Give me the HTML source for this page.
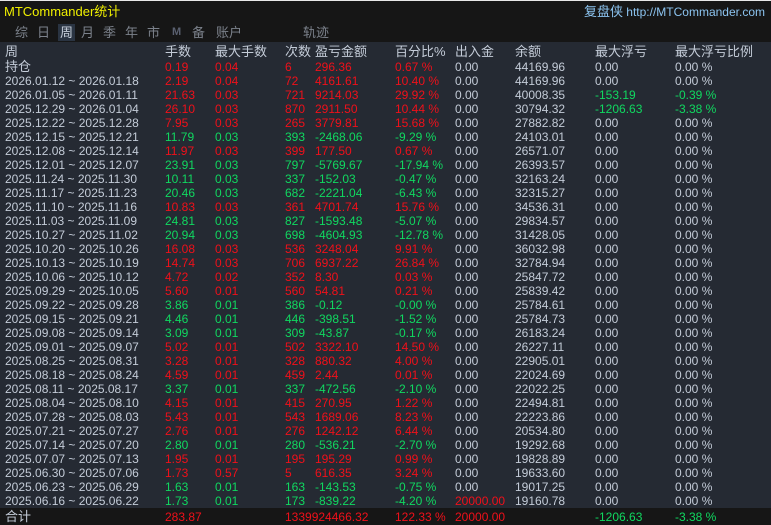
<!DOCTYPE html>
<html><head><meta charset="utf-8"><style>
*{margin:0;padding:0;box-sizing:border-box}
body{width:771px;height:525px;background:#252a33;font-family:"Liberation Sans","Noto Sans CJK SC",sans-serif;font-size:12px;color:#c4ccd8;position:relative;overflow:hidden}
#top{position:absolute;left:0;top:0;width:771px;height:42px;background:#161616;border-top:1px solid #e8e8e8}
#title{position:absolute;left:4px;top:0px;color:#f0f000;font-size:13px}
#site{position:absolute;right:6px;top:0px;color:#8cc4f0;font-size:12px}
#site b{font-weight:normal;font-size:13px}
.tab{position:absolute;top:24px;color:#7c828c;font-size:13px;height:17px;line-height:17px}
.tab.sel{background:#2a3442;color:#c8d0dc;padding:0 2px}
.row{position:absolute;left:0;width:771px;height:14px;line-height:14px;white-space:nowrap}
.row span{position:absolute}
.row span:nth-child(1){left:5px}
.row span:nth-child(2){left:165px}
.row span:nth-child(3){left:215px}
.row span:nth-child(4){left:285px}
.row span:nth-child(5){left:315px}
.row span:nth-child(6){left:395px}
.row span:nth-child(7){left:455px}
.row span:nth-child(8){left:515px}
.row span:nth-child(9){left:595px}
.row span:nth-child(10){left:675px}
.r span:nth-child(n+2):nth-child(-n+6){color:#f0101a}
.g span:nth-child(n+2):nth-child(-n+6){color:#10d860}
.hd{font-size:13px}
.gr{color:#10d860!important}.rd{color:#f0101a!important}
#foot{position:absolute;left:0;top:508px;width:771px;height:17px;background:#161616}
</style></head><body>
<div id="top">
<div id="title">MTCommander统计</div>
<div id="site"><b>复盘侠</b> http://MTCommander.com</div>
</div>
<div class="tab" style="left:15px">综</div>
<div class="tab" style="left:37px">日</div>
<div class="tab sel" style="left:58px">周</div>
<div class="tab" style="left:81px">月</div>
<div class="tab" style="left:103px">季</div>
<div class="tab" style="left:125px">年</div>
<div class="tab" style="left:147px">市</div>
<div class="tab" style="left:172px;font-size:11px;font-weight:bold;color:#5a6070">M</div>
<div class="tab" style="left:192px">备</div>
<div class="tab" style="left:216px">账户</div>
<div class="tab" style="left:303px">轨迹</div>

<div class="row hd" style="top:45px"><span>周</span><span>手数</span><span>最大手数</span><span>次数</span><span>盈亏金额</span><span>百分比%</span><span>出入金</span><span>余额</span><span>最大浮亏</span><span>最大浮亏比例</span></div>
<div class="row r" style="top:60px"><span class="hd">持仓</span><span>0.19</span><span>0.04</span><span>6</span><span>296.36</span><span>0.67 %</span><span>0.00</span><span>44169.96</span><span>0.00</span><span>0.00 %</span></div>
<div class="row r" style="top:74px"><span>2026.01.12 ~ 2026.01.18</span><span>2.19</span><span>0.04</span><span>72</span><span>4161.61</span><span>10.40 %</span><span>0.00</span><span>44169.96</span><span>0.00</span><span>0.00 %</span></div>
<div class="row r" style="top:88px"><span>2026.01.05 ~ 2026.01.11</span><span>21.63</span><span>0.03</span><span>721</span><span>9214.03</span><span>29.92 %</span><span>0.00</span><span>40008.35</span><span class="gr">-153.19</span><span class="gr">-0.39 %</span></div>
<div class="row r" style="top:102px"><span>2025.12.29 ~ 2026.01.04</span><span>26.10</span><span>0.03</span><span>870</span><span>2911.50</span><span>10.44 %</span><span>0.00</span><span>30794.32</span><span class="gr">-1206.63</span><span class="gr">-3.38 %</span></div>
<div class="row r" style="top:116px"><span>2025.12.22 ~ 2025.12.28</span><span>7.95</span><span>0.03</span><span>265</span><span>3779.81</span><span>15.68 %</span><span>0.00</span><span>27882.82</span><span>0.00</span><span>0.00 %</span></div>
<div class="row g" style="top:130px"><span>2025.12.15 ~ 2025.12.21</span><span>11.79</span><span>0.03</span><span>393</span><span>-2468.06</span><span>-9.29 %</span><span>0.00</span><span>24103.01</span><span>0.00</span><span>0.00 %</span></div>
<div class="row r" style="top:144px"><span>2025.12.08 ~ 2025.12.14</span><span>11.97</span><span>0.03</span><span>399</span><span>177.50</span><span>0.67 %</span><span>0.00</span><span>26571.07</span><span>0.00</span><span>0.00 %</span></div>
<div class="row g" style="top:158px"><span>2025.12.01 ~ 2025.12.07</span><span>23.91</span><span>0.03</span><span>797</span><span>-5769.67</span><span>-17.94 %</span><span>0.00</span><span>26393.57</span><span>0.00</span><span>0.00 %</span></div>
<div class="row g" style="top:172px"><span>2025.11.24 ~ 2025.11.30</span><span>10.11</span><span>0.03</span><span>337</span><span>-152.03</span><span>-0.47 %</span><span>0.00</span><span>32163.24</span><span>0.00</span><span>0.00 %</span></div>
<div class="row g" style="top:186px"><span>2025.11.17 ~ 2025.11.23</span><span>20.46</span><span>0.03</span><span>682</span><span>-2221.04</span><span>-6.43 %</span><span>0.00</span><span>32315.27</span><span>0.00</span><span>0.00 %</span></div>
<div class="row r" style="top:200px"><span>2025.11.10 ~ 2025.11.16</span><span>10.83</span><span>0.03</span><span>361</span><span>4701.74</span><span>15.76 %</span><span>0.00</span><span>34536.31</span><span>0.00</span><span>0.00 %</span></div>
<div class="row g" style="top:214px"><span>2025.11.03 ~ 2025.11.09</span><span>24.81</span><span>0.03</span><span>827</span><span>-1593.48</span><span>-5.07 %</span><span>0.00</span><span>29834.57</span><span>0.00</span><span>0.00 %</span></div>
<div class="row g" style="top:228px"><span>2025.10.27 ~ 2025.11.02</span><span>20.94</span><span>0.03</span><span>698</span><span>-4604.93</span><span>-12.78 %</span><span>0.00</span><span>31428.05</span><span>0.00</span><span>0.00 %</span></div>
<div class="row r" style="top:242px"><span>2025.10.20 ~ 2025.10.26</span><span>16.08</span><span>0.03</span><span>536</span><span>3248.04</span><span>9.91 %</span><span>0.00</span><span>36032.98</span><span>0.00</span><span>0.00 %</span></div>
<div class="row r" style="top:256px"><span>2025.10.13 ~ 2025.10.19</span><span>14.74</span><span>0.03</span><span>706</span><span>6937.22</span><span>26.84 %</span><span>0.00</span><span>32784.94</span><span>0.00</span><span>0.00 %</span></div>
<div class="row r" style="top:270px"><span>2025.10.06 ~ 2025.10.12</span><span>4.72</span><span>0.02</span><span>352</span><span>8.30</span><span>0.03 %</span><span>0.00</span><span>25847.72</span><span>0.00</span><span>0.00 %</span></div>
<div class="row r" style="top:284px"><span>2025.09.29 ~ 2025.10.05</span><span>5.60</span><span>0.01</span><span>560</span><span>54.81</span><span>0.21 %</span><span>0.00</span><span>25839.42</span><span>0.00</span><span>0.00 %</span></div>
<div class="row g" style="top:298px"><span>2025.09.22 ~ 2025.09.28</span><span>3.86</span><span>0.01</span><span>386</span><span>-0.12</span><span>-0.00 %</span><span>0.00</span><span>25784.61</span><span>0.00</span><span>0.00 %</span></div>
<div class="row g" style="top:312px"><span>2025.09.15 ~ 2025.09.21</span><span>4.46</span><span>0.01</span><span>446</span><span>-398.51</span><span>-1.52 %</span><span>0.00</span><span>25784.73</span><span>0.00</span><span>0.00 %</span></div>
<div class="row g" style="top:326px"><span>2025.09.08 ~ 2025.09.14</span><span>3.09</span><span>0.01</span><span>309</span><span>-43.87</span><span>-0.17 %</span><span>0.00</span><span>26183.24</span><span>0.00</span><span>0.00 %</span></div>
<div class="row r" style="top:340px"><span>2025.09.01 ~ 2025.09.07</span><span>5.02</span><span>0.01</span><span>502</span><span>3322.10</span><span>14.50 %</span><span>0.00</span><span>26227.11</span><span>0.00</span><span>0.00 %</span></div>
<div class="row r" style="top:354px"><span>2025.08.25 ~ 2025.08.31</span><span>3.28</span><span>0.01</span><span>328</span><span>880.32</span><span>4.00 %</span><span>0.00</span><span>22905.01</span><span>0.00</span><span>0.00 %</span></div>
<div class="row r" style="top:368px"><span>2025.08.18 ~ 2025.08.24</span><span>4.59</span><span>0.01</span><span>459</span><span>2.44</span><span>0.01 %</span><span>0.00</span><span>22024.69</span><span>0.00</span><span>0.00 %</span></div>
<div class="row g" style="top:382px"><span>2025.08.11 ~ 2025.08.17</span><span>3.37</span><span>0.01</span><span>337</span><span>-472.56</span><span>-2.10 %</span><span>0.00</span><span>22022.25</span><span>0.00</span><span>0.00 %</span></div>
<div class="row r" style="top:396px"><span>2025.08.04 ~ 2025.08.10</span><span>4.15</span><span>0.01</span><span>415</span><span>270.95</span><span>1.22 %</span><span>0.00</span><span>22494.81</span><span>0.00</span><span>0.00 %</span></div>
<div class="row r" style="top:410px"><span>2025.07.28 ~ 2025.08.03</span><span>5.43</span><span>0.01</span><span>543</span><span>1689.06</span><span>8.23 %</span><span>0.00</span><span>22223.86</span><span>0.00</span><span>0.00 %</span></div>
<div class="row r" style="top:424px"><span>2025.07.21 ~ 2025.07.27</span><span>2.76</span><span>0.01</span><span>276</span><span>1242.12</span><span>6.44 %</span><span>0.00</span><span>20534.80</span><span>0.00</span><span>0.00 %</span></div>
<div class="row g" style="top:438px"><span>2025.07.14 ~ 2025.07.20</span><span>2.80</span><span>0.01</span><span>280</span><span>-536.21</span><span>-2.70 %</span><span>0.00</span><span>19292.68</span><span>0.00</span><span>0.00 %</span></div>
<div class="row r" style="top:452px"><span>2025.07.07 ~ 2025.07.13</span><span>1.95</span><span>0.01</span><span>195</span><span>195.29</span><span>0.99 %</span><span>0.00</span><span>19828.89</span><span>0.00</span><span>0.00 %</span></div>
<div class="row r" style="top:466px"><span>2025.06.30 ~ 2025.07.06</span><span>1.73</span><span>0.57</span><span>5</span><span>616.35</span><span>3.24 %</span><span>0.00</span><span>19633.60</span><span>0.00</span><span>0.00 %</span></div>
<div class="row g" style="top:480px"><span>2025.06.23 ~ 2025.06.29</span><span>1.63</span><span>0.01</span><span>163</span><span>-143.53</span><span>-0.75 %</span><span>0.00</span><span>19017.25</span><span>0.00</span><span>0.00 %</span></div>
<div class="row g" style="top:494px"><span>2025.06.16 ~ 2025.06.22</span><span>1.73</span><span>0.01</span><span>173</span><span>-839.22</span><span>-4.20 %</span><span class="rd">20000.00</span><span>19160.78</span><span>0.00</span><span>0.00 %</span></div>
<div id="foot"></div>
<div class="row" style="top:510px"><span class="hd">合计</span><span class="rd">283.87</span><span></span><span></span><span class="rd" style="left:285px">1339924466.32</span><span class="rd">122.33 %</span><span class="rd">20000.00</span><span></span><span class="gr">-1206.63</span><span class="gr">-3.38 %</span></div>
</body></html>
